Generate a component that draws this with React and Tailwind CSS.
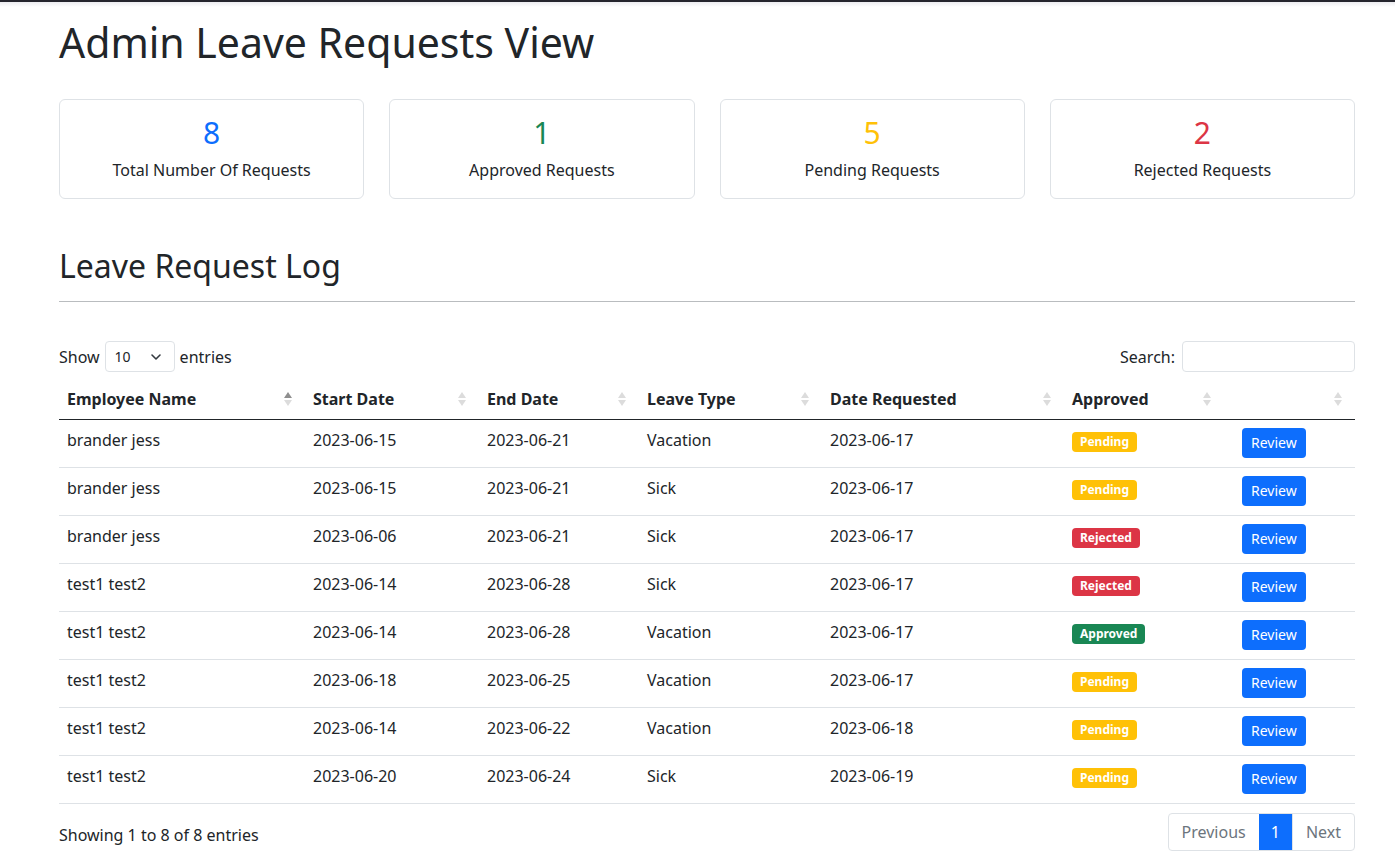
import React from 'react';

const stats = [
  { value: 8, label: 'Total Number Of Requests', color: 'text-[#0d6efd]' },
  { value: 1, label: 'Approved Requests', color: 'text-[#198754]' },
  { value: 5, label: 'Pending Requests', color: 'text-[#ffc107]' },
  { value: 2, label: 'Rejected Requests', color: 'text-[#dc3545]' },
];

const columns = [
  { name: 'Employee Name', width: 'w-[246px]', active: true },
  { name: 'Start Date', width: 'w-[174px]' },
  { name: 'End Date', width: 'w-[160px]' },
  { name: 'Leave Type', width: 'w-[183px]' },
  { name: 'Date Requested', width: 'w-[242px]' },
  { name: 'Approved', width: 'w-[160px]' },
  { name: '', width: 'w-[131px]' },
];

const rows = [
  ['brander jess', '2023-06-15', '2023-06-21', 'Vacation', '2023-06-17', 'Pending'],
  ['brander jess', '2023-06-15', '2023-06-21', 'Sick', '2023-06-17', 'Pending'],
  ['brander jess', '2023-06-06', '2023-06-21', 'Sick', '2023-06-17', 'Rejected'],
  ['test1 test2', '2023-06-14', '2023-06-28', 'Sick', '2023-06-17', 'Rejected'],
  ['test1 test2', '2023-06-14', '2023-06-28', 'Vacation', '2023-06-17', 'Approved'],
  ['test1 test2', '2023-06-18', '2023-06-25', 'Vacation', '2023-06-17', 'Pending'],
  ['test1 test2', '2023-06-14', '2023-06-22', 'Vacation', '2023-06-18', 'Pending'],
  ['test1 test2', '2023-06-20', '2023-06-24', 'Sick', '2023-06-19', 'Pending'],
];

const badgeStyles = {
  Pending: 'bg-[#ffc107] text-white',
  Rejected: 'bg-[#dc3545] text-white',
  Approved: 'bg-[#198754] text-white',
};

const SortIcon = ({ active }) => (
  <svg width="8" height="14" viewBox="0 0 8 14" className="shrink-0">
    <path d="M4 0 L8 6 L0 6 Z" fill={active ? '#8f8f8f' : '#dcdcdc'} />
    <path d="M4 14 L8 8 L0 8 Z" fill="#dcdcdc" />
  </svg>
);

const App = () => {
  return (
    <div className="min-h-screen bg-white text-[#212529] font-['Noto_Sans',sans-serif] text-base">
      <div className="h-[2px] bg-[#25252d]" />
      <div className="h-[5px] bg-gradient-to-b from-[#ececf0] to-white" />
      <div className="ml-[59px] w-[1296px] pt-[11px]">
        <h1 className="text-[41px] leading-[48px] font-normal">Admin Leave Requests View</h1>

        <div className="mt-[33px] grid grid-cols-4 gap-[25px]">
          {stats.map((s) => (
            <div
              key={s.label}
              className="h-[100px] border border-[#dee2e6] rounded-[6px] flex flex-col items-center pt-[14px]"
            >
              <div className={`text-[30px] leading-[38px] ${s.color}`}>{s.value}</div>
              <div className="mt-[6px] text-base leading-6">{s.label}</div>
            </div>
          ))}
        </div>

        <h2 className="mt-[48px] text-[32px] leading-[38px] font-normal">Leave Request Log</h2>
        <hr className="mt-[16px] border-0 border-t border-[#b9bcbf]" />

        <div className="mt-[39px] flex items-center justify-between h-[31px]">
          <div className="flex items-center gap-[5px]">
            <span>Show</span>
            <div className="h-[31px] w-[70px] border border-[#dee2e6] rounded-[4px] flex items-center justify-between pl-[9px] pr-[12px] text-sm">
              <span>10</span>
              <svg width="12" height="8" viewBox="0 0 12 8">
                <path d="M2 2 L6 6 L10 2" fill="none" stroke="#343a40" strokeWidth="1.6" strokeLinecap="round" strokeLinejoin="round" />
              </svg>
            </div>
            <span>entries</span>
          </div>
          <div className="flex items-center gap-[7px]">
            <span>Search:</span>
            <div className="h-[31px] w-[173px] border border-[#dee2e6] rounded-[4px]" />
          </div>
        </div>

        <div className="mt-[13px]">
          <div className="flex h-[35px] border-b border-[#212529]">
            {columns.map((c, i) => (
              <div
                key={i}
                className={`${c.width} flex items-center justify-between pl-[8px] pr-[13px] pb-[6px] font-bold`}
              >
                <span>{c.name}</span>
                <SortIcon active={c.active} />
              </div>
            ))}
          </div>
          {rows.map((r, ri) => (
            <div key={ri} className="flex h-[48px] border-b border-[#dee2e6] items-center">
              {r.slice(0, 5).map((cell, ci) => (
                <div key={ci} className={`${columns[ci].width} pl-[8px] -mt-[7px]`}>
                  {cell}
                </div>
              ))}
              <div className={`${columns[5].width} pl-[8px] -mt-[8px]`}>
                <span
                  className={`inline-block px-[8px] py-[3px] text-[12px] leading-[14px] font-bold rounded-[4px] ${badgeStyles[r[5]]}`}
                >
                  {r[5]}
                </span>
              </div>
              <div className={`${columns[6].width} pl-[18px] -mt-[1px]`}>
                <button className="h-[30px] px-[9px] bg-[#0d6efd] text-white text-sm rounded-[4px]">
                  Review
                </button>
              </div>
            </div>
          ))}
        </div>

        <div className="mt-[9px] flex items-center justify-between">
          <div className="pt-[5px]">Showing 1 to 8 of 8 entries</div>
          <div className="flex h-[38px] border border-[#dee2e6] rounded-[4px] overflow-hidden text-[#6c757d]">
            <div className="px-[13px] flex items-center">Previous</div>
            <div className="px-[12px] flex items-center bg-[#0d6efd] text-white">1</div>
            <div className="px-[13px] flex items-center border-l border-[#dee2e6]">Next</div>
          </div>
        </div>
      </div>
    </div>
  );
};

export default App;
